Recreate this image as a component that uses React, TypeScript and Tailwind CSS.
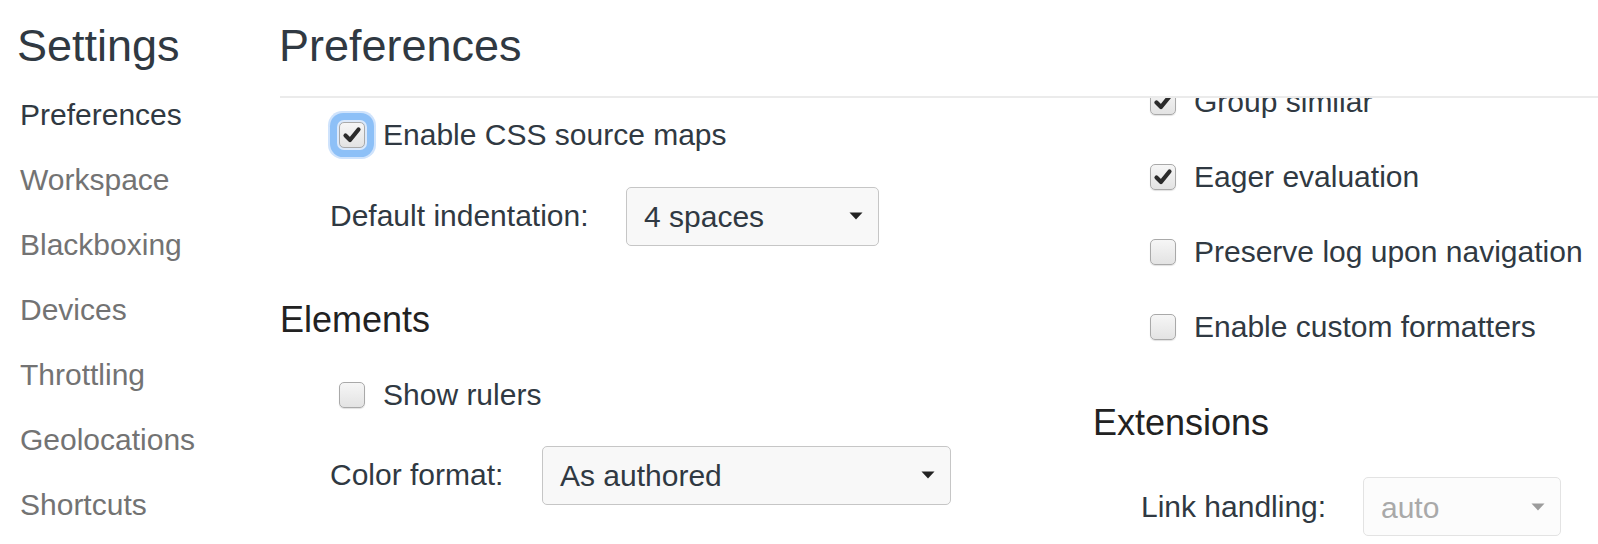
import React from "react";

const navItems = ["Preferences", "Workspace", "Blackboxing", "Devices", "Throttling", "Geolocations", "Shortcuts"];

function Checkbox({ checked, focused }: { checked?: boolean; focused?: boolean }) {
  return (
    <span
      className={
        "relative flex h-[26px] w-[26px] shrink-0 items-center justify-center rounded-[5px] border border-[#a9a9a9] bg-gradient-to-b from-[#f6f6f6] to-[#e3e3e3] " +
        (focused
          ? "shadow-[0_0_0_2px_#dbe9fb,0_0_0_9px_#8dc0f7,0_0_0_11px_#cfe3fc]"
          : "shadow-[0_1px_1px_rgba(0,0,0,0.12)]")
      }
    >
      {checked && (
        <svg width="22" height="22" viewBox="0 0 22 22">
          <path d="M4.5 11.5 L9 16 L17.5 5.5" fill="none" stroke="#2b2b2b" strokeWidth="4.2" strokeLinecap="round" strokeLinejoin="round" />
        </svg>
      )}
    </span>
  );
}

function CheckRow({ label, checked, focused, className }: { label: string; checked?: boolean; focused?: boolean; className: string }) {
  return (
    <div className={"flex h-[36px] items-center pl-[62px] " + className}>
      <Checkbox checked={checked} focused={focused} />
      <span className="ml-[18px] whitespace-nowrap text-[30px] leading-[36px] text-[#303942]">{label}</span>
    </div>
  );
}

function SelectRow({
  label,
  value,
  labelWidth,
  selectWidth,
  disabled,
  className,
}: {
  label: string;
  value: string;
  labelWidth: string;
  selectWidth: string;
  disabled?: boolean;
  className: string;
}) {
  return (
    <div className={"flex items-center pl-[53px] " + className}>
      <span className={"whitespace-nowrap text-[30px] leading-[36px] text-[#303942] " + labelWidth}>{label}</span>
      <div
        className={
          "flex h-[59px] items-center justify-between rounded-[5px] border pl-[17px] pr-[15px] text-[30px] leading-[36px] " +
          selectWidth +
          (disabled ? " border-[#e3e3e3] bg-[#fcfcfc] text-[#a9a9a9]" : " border-[#c6c6c6] bg-[#f8f8f8] text-[#303942]")
        }
      >
        <span className="pt-[2px]">{value}</span>
        <svg width="14" height="8" viewBox="0 0 14 8">
          <path d="M0.5 0.5 H13.5 L7 7.5 Z" fill={disabled ? "#9c9c9c" : "#222"} />
        </svg>
      </div>
    </div>
  );
}

export default function App() {
  return (
    <div className="flex h-[544px] w-[1598px] overflow-hidden bg-white font-['Liberation_Sans',Arial,sans-serif]">
      {/* Sidebar */}
      <aside className="w-[277px] shrink-0 pl-[17px] pt-[24px]">
        <h1 className="text-[45px] leading-[44px] text-[#303942]">Settings</h1>
        <nav className="mt-[14px] pl-[3px]">
          {navItems.map((item, i) => (
            <div
              key={item}
              className={"text-[30px] leading-[65px] " + (i === 0 ? "text-[#303942]" : "text-[#737373]")}
            >
              {item}
            </div>
          ))}
        </nav>
      </aside>

      {/* Main */}
      <main className="flex min-w-0 flex-1 flex-col">
        <h2 className="pl-[2px] pt-[24px] text-[45px] leading-[44px] text-[#303942]">Preferences</h2>
        <div className="ml-[3px] mt-[28px] h-[2px] bg-[#ebebeb]" />

        <div className="flex flex-1 overflow-hidden">
          {/* Left column */}
          <div className="w-[811px] shrink-0">
            <CheckRow label="Enable CSS source maps" checked focused className="mt-[18.6px]" />
            <SelectRow
              label="Default indentation:"
              value="4 spaces"
              labelWidth="w-[296px]"
              selectWidth="w-[253px]"
              className="mt-[34px]"
            />
            <h3 className="mt-[52px] pl-[3px] text-[36px] leading-[44px] text-[#222222]">Elements</h3>
            <CheckRow label="Show rulers" className="mt-[35.7px]" />
            <SelectRow
              label="Color format:"
              value="As authored"
              labelWidth="w-[212px]"
              selectWidth="w-[409px]"
              className="mt-[32.3px]"
            />
          </div>

          {/* Right column */}
          <div className="flex-1">
            <CheckRow label="Group similar" checked className="mt-[-14.4px]" />
            <CheckRow label="Eager evaluation" checked className="mt-[39.5px]" />
            <CheckRow label="Preserve log upon navigation" className="mt-[39px]" />
            <CheckRow label="Enable custom formatters" className="mt-[39px]" />
            <h3 className="mt-[55.5px] pl-[5px] text-[36px] leading-[44px] text-[#222222]">Extensions</h3>
            <SelectRow
              label="Link handling:"
              value="auto"
              labelWidth="w-[222px]"
              selectWidth="w-[198px]"
              disabled
              className="mt-[32.5px]"
            />
          </div>
        </div>
      </main>
    </div>
  );
}
